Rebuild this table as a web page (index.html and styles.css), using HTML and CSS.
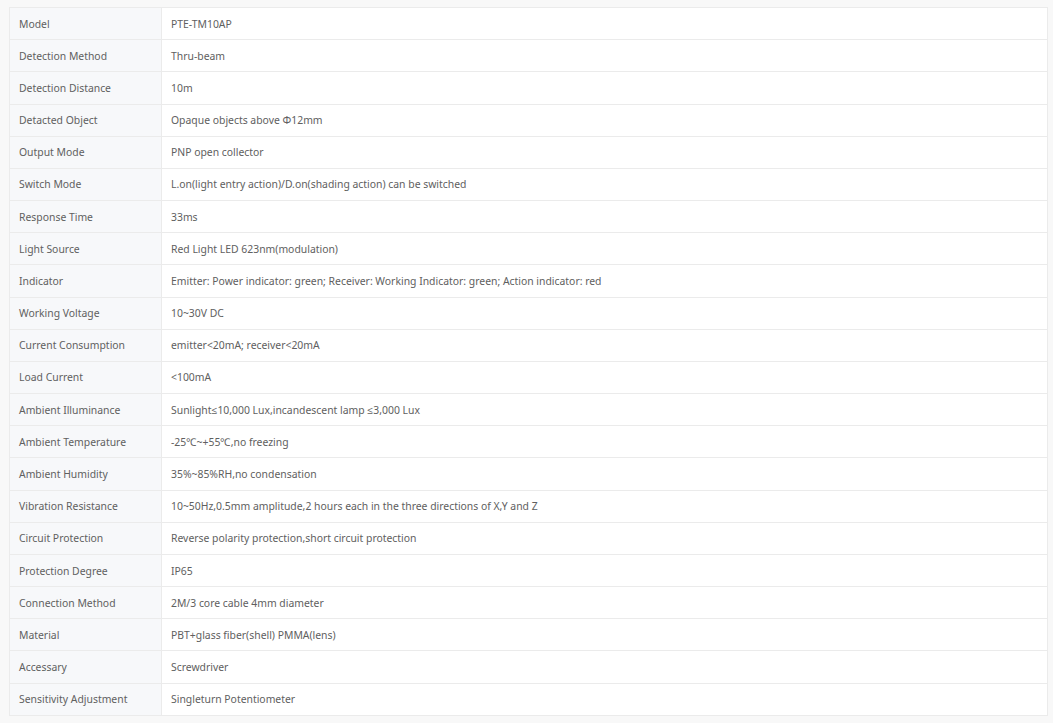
FILE: index.html
```html
<!DOCTYPE html>
<html lang="en">
<head>
    <meta charset="UTF-8">
    <meta name="viewport" content="width=device-width, initial-scale=1.0">
    <title>PTE-TM10AP Specifications</title>
    <link rel="stylesheet" href="styles.css">
</head>
<body>
    <div class="spec-wrap">
        <table class="spec-table">
            <tr><td class="label">Model</td><td>PTE-TM10AP</td></tr>
            <tr><td class="label">Detection Method</td><td>Thru-beam</td></tr>
            <tr><td class="label">Detection Distance</td><td>10m</td></tr>
            <tr><td class="label">Detacted Object</td><td>Opaque objects above Φ12mm</td></tr>
            <tr><td class="label">Output Mode</td><td>PNP open collector</td></tr>
            <tr><td class="label">Switch Mode</td><td>L.on(light entry action)/D.on(shading action) can be switched</td></tr>
            <tr><td class="label">Response Time</td><td>33ms</td></tr>
            <tr><td class="label">Light Source</td><td>Red Light LED 623nm(modulation)</td></tr>
            <tr><td class="label">Indicator</td><td>Emitter: Power indicator: green; Receiver: Working Indicator: green; Action indicator: red</td></tr>
            <tr><td class="label">Working Voltage</td><td>10~30V DC</td></tr>
            <tr><td class="label">Current Consumption</td><td>emitter&lt;20mA; receiver&lt;20mA</td></tr>
            <tr><td class="label">Load Current</td><td>&lt;100mA</td></tr>
            <tr><td class="label">Ambient Illuminance</td><td>Sunlight≤10,000 Lux,incandescent lamp ≤3,000 Lux</td></tr>
            <tr><td class="label">Ambient Temperature</td><td>-25℃~+55℃,no freezing</td></tr>
            <tr><td class="label">Ambient Humidity</td><td>35%~85%RH,no condensation</td></tr>
            <tr><td class="label">Vibration Resistance</td><td>10~50Hz,0.5mm amplitude,2 hours each in the three directions of X,Y and Z</td></tr>
            <tr><td class="label">Circuit Protection</td><td>Reverse polarity protection,short circuit protection</td></tr>
            <tr><td class="label">Protection Degree</td><td>IP65</td></tr>
            <tr><td class="label">Connection Method</td><td>2M/3 core cable 4mm diameter</td></tr>
            <tr><td class="label">Material</td><td>PBT+glass fiber(shell) PMMA(lens)</td></tr>
            <tr><td class="label">Accessary</td><td>Screwdriver</td></tr>
            <tr><td class="label">Sensitivity Adjustment</td><td>Singleturn Potentiometer</td></tr>
        </table>
    </div>
</body>
</html>
```

FILE: styles.css
```css
html, body {
    margin: 0;
    padding: 0;
    background-color: #f8f8f8;
}
body {
    font-family: "Noto Sans", "Open Sans", Arial, sans-serif;
    font-size: 10.4px;
    color: #606060;
}
.spec-wrap {
    padding: 7px 5px 0 9px;
}
.spec-table {
    width: 100%;
    border-collapse: collapse;
    background: white;
    border: 1px solid #ebebeb;
}
.spec-table tr {
    height: 32.18px;
}
.spec-table td {
    border: 1px solid #ebebeb;
    padding: 0 9px;
    vertical-align: middle;
}
.spec-table td.label {
    width: 133px;
    background-color: #f7f8fa;
}
```
